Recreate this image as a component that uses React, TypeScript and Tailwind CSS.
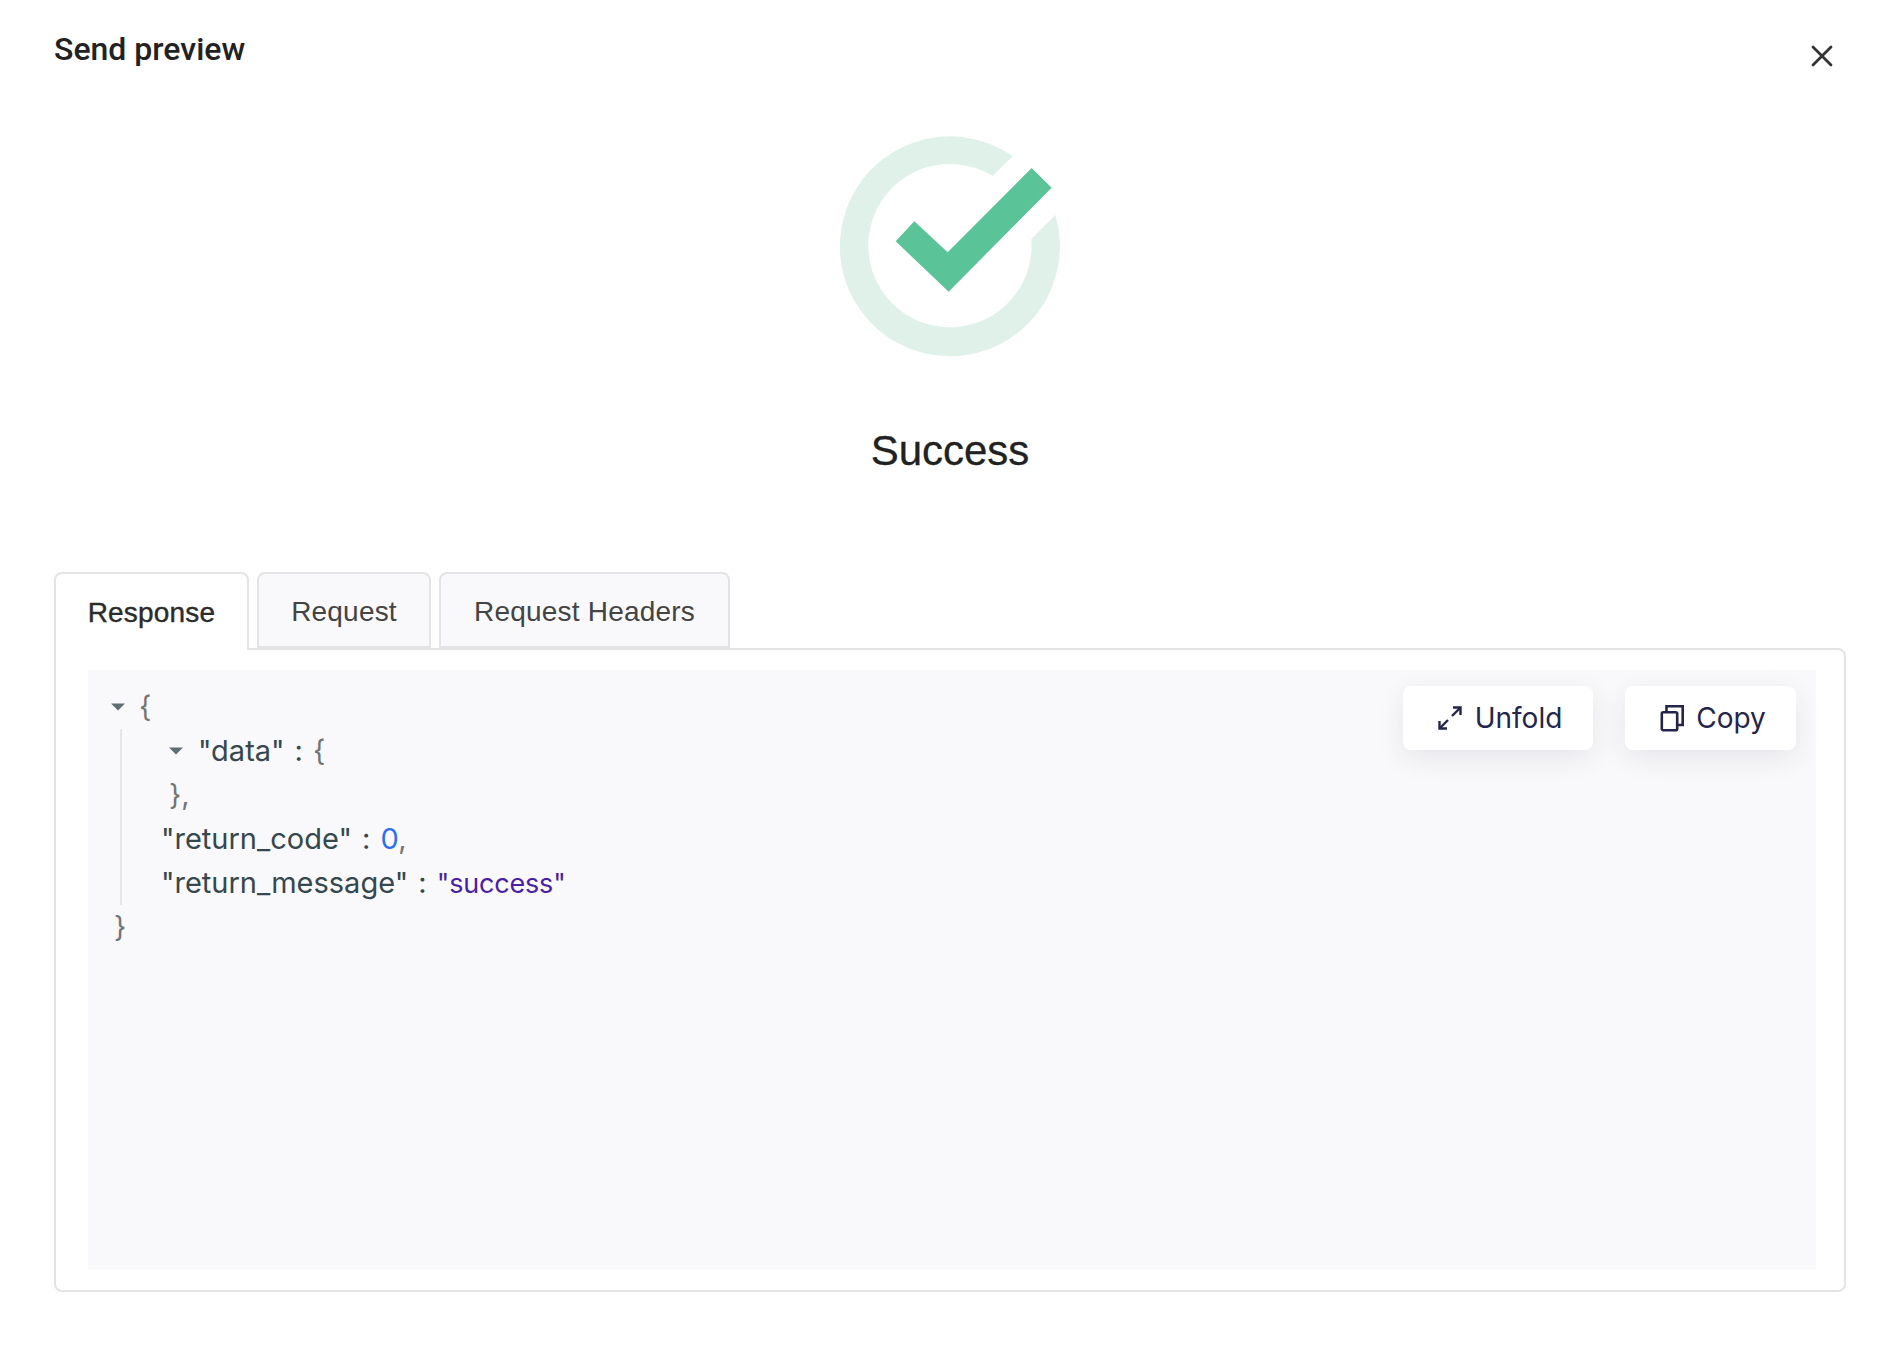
const inter = "font-['Inter',sans-serif]";

const Caret = ({ className }: { className: string }) => (
  <svg width="14" height="8" viewBox="0 0 14 8" className={className}>
    <path d="M0 0.5h14L7 7.5z" fill="#5f6e75" />
  </svg>
);

const SuccessIcon = () => (
  <svg width="300" height="270" viewBox="0 0 900 810" className="block">
    <path
      d="M638 138A330 330 0 1 0 766 315L694 387A245 245 0 1 1 578 198Z"
      fill="#dff1e9"
    />
    <path d="M287 394L343 334L443 427L695 174L755 233L446 545Z" fill="#5bc398" />
  </svg>
);

const Tab = ({ label, width, active }: { label: string; width: string; active?: boolean }) => (
  <div
    className={`${width} ${
      active ? "h-[78px] bg-white text-[#2b2b2b] [-webkit-text-stroke:0.4px_#2b2b2b]" : "h-[76px] bg-[#f9f9fb] text-[#444]"
    } flex items-center justify-center rounded-t-lg border-2 ${active ? "border-b-0 pt-[1px]" : "pt-[4px]"} border-[#e4e4e6] text-[28px] font-['Liberation_Sans',sans-serif] tracking-[0.2px]`}
  >
    {label}
  </div>
);

const Button = ({ width, label, icon }: { width: string; label: string; icon: React.ReactNode }) => (
  <button
    className={`${width} flex h-16 items-center justify-center gap-3 rounded-lg bg-white pl-[3px] text-[28px] text-[#23264a] shadow-[0_8px_28px_rgba(40,44,80,0.09)] ${inter}`}
  >
    {icon}
    {label}
  </button>
);

const UnfoldIcon = () => (
  <svg width="26" height="26" viewBox="0 0 26 26" fill="none" stroke="#23264a" strokeWidth="2.4">
    <path d="M16 2.5h7.5V10" />
    <path d="M23 3L15 11" />
    <path d="M2.5 16v7.5H10" />
    <path d="M3 23L11 15" />
  </svg>
);

const CopyIcon = () => (
  <svg width="26" height="28" viewBox="0 0 26 28" fill="none" stroke="#23264a" strokeWidth="2.6">
    <rect x="3.8" y="8.3" width="15.4" height="18" rx="1.5" />
    <path d="M8.5 8V2.3H24.7V21H19.2" />
  </svg>
);

export default function App() {
  return (
    <div className="flex h-[1368px] w-[1896px] flex-col bg-white pr-[50px] pl-[54px]">
      <div className="flex h-[100px] items-start justify-between">
        <h1 className="mt-[30px] text-[32px] leading-[38px] font-medium text-[#222] font-['Roboto',sans-serif]">
          Send preview
        </h1>
        <svg width="24" height="24" viewBox="0 0 24 24" className="mt-[44px] mr-[12px]" stroke="#333" strokeWidth="2.8" strokeLinecap="round">
          <path d="M3 3L21 21M21 3L3 21" />
        </svg>
      </div>

      <div className="flex flex-col items-center">
        <div className="mt-[10px]">
          <SuccessIcon />
        </div>
        <div className="mt-[47px] text-[42px] leading-[48px] text-[#222] [-webkit-text-stroke:0.3px_#222] font-['Liberation_Sans',sans-serif]">
          Success
        </div>
      </div>

      <div className="mt-[97px] flex flex-col">
        <div className="relative z-10 -mb-[2px] flex items-start gap-2">
          <Tab label="Response" width="w-[195px]" active />
          <Tab label="Request" width="w-[174px]" />
          <Tab label="Request Headers" width="w-[291px]" />
        </div>

        <div className="h-[644px] rounded-b-lg rounded-tr-lg border-2 border-[#e4e4e6] pt-[20px] pr-[28px] pb-[20px] pl-[32px]">
          <div className={`relative h-full bg-[#f9f9fb] pt-[15px] pl-[23px] text-[29px] leading-[44px] text-[#35474f] ${inter}`}>
            <div className="flex items-center">
              <Caret className="mr-[14px]" />
              <span className="text-[#757575]">{"{"}</span>
            </div>
            <div className="ml-[9px] h-[176px] border-l-2 border-[#e6e6ea] pl-[39px]">
              <div className="ml-[8px] flex items-center">
                <Caret className="mr-[15px]" />
                <span>"data"</span>
                <span className="ml-[10px]">:</span>
                <span className="ml-[10px] text-[#757575]">{"{"}</span>
              </div>
              <div className="ml-[8px] text-[#757575]">{"},"}</div>
              <div>
                "return_code" <span className="ml-[2px]">:</span>{" "}
                <span className="ml-[2px] text-[#2f6fed]">0</span>
                <span className="text-[#757575]">,</span>
              </div>
              <div>
                "return_message" <span className="ml-[2px]">:</span>{" "}
                <span className="ml-[2px] text-[27px] tracking-[-0.2px] text-[#4b1fa3]">"success"</span>
              </div>
            </div>
            <div className="ml-[3px] text-[#757575]">{"}"}</div>

            <div className="absolute top-4 right-5 flex gap-8">
              <Button width="w-[190px]" label="Unfold" icon={<UnfoldIcon />} />
              <Button width="w-[171px]" label="Copy" icon={<CopyIcon />} />
            </div>
          </div>
        </div>
      </div>
    </div>
  );
}
